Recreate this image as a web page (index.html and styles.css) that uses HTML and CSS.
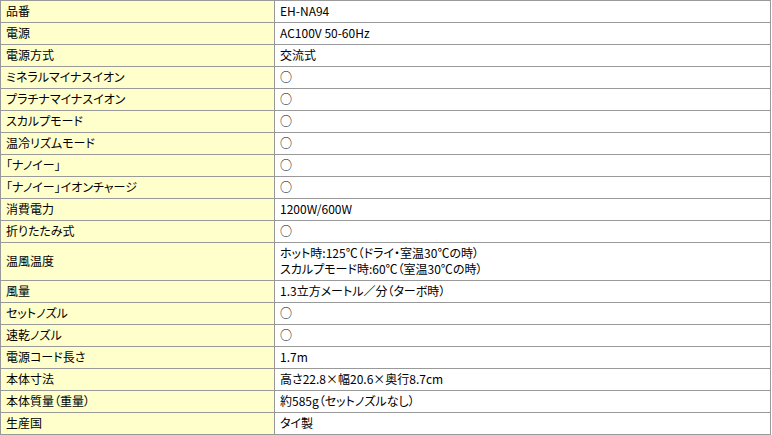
FILE: index.html
```html
<!DOCTYPE html>
<html lang="ja">
<head>
<meta charset="utf-8">
<title>仕様</title>
<link rel="stylesheet" href="styles.css">
</head>
<body>
<table class="spec">
<tbody>
<tr><th>品番</th><td>EH-NA94</td></tr>
<tr><th>電源</th><td>AC100V 50-60Hz</td></tr>
<tr><th>電源方式</th><td>交流式</td></tr>
<tr><th>ミネラルマイナスイオン</th><td>○</td></tr>
<tr><th>プラチナマイナスイオン</th><td>○</td></tr>
<tr><th>スカルプモード</th><td>○</td></tr>
<tr><th>温冷リズムモード</th><td>○</td></tr>
<tr><th>「ナノイー」</th><td>○</td></tr>
<tr><th>「ナノイー」イオンチャージ</th><td>○</td></tr>
<tr><th>消費電力</th><td>1200W/600W</td></tr>
<tr><th>折りたたみ式</th><td>○</td></tr>
<tr><th>温風温度</th><td>ホット時:125℃（ドライ・室温30℃の時）<br>スカルプモード時:60℃（室温30℃の時）</td></tr>
<tr><th>風量</th><td>1.3立方メートル／分（ターボ時）</td></tr>
<tr><th>セットノズル</th><td>○</td></tr>
<tr><th>速乾ノズル</th><td>○</td></tr>
<tr><th>電源コード長さ</th><td>1.7m</td></tr>
<tr><th>本体寸法</th><td>高さ22.8×幅20.6×奥行8.7cm</td></tr>
<tr><th>本体質量（重量）</th><td>約585g（セットノズルなし）</td></tr>
<tr><th>生産国</th><td>タイ製</td></tr>
</tbody>
</table>
</body>
</html>
```
FILE: styles.css
```css
html, body {
  margin: 0;
  padding: 0;
  background: #ffffff;
}
.spec {
  width: 771px;
  border-collapse: collapse;
  font-family: "Noto Sans CJK JP", "Liberation Sans", sans-serif;
  font-size: 12px;
  color: #000000;
  table-layout: fixed;
  font-feature-settings: "palt";
}
.spec th,
.spec td {
  border: 1px solid #999999;
  padding: 2px 4px 3px 5px;
  line-height: 16px;
  height: 16px;
  text-align: left;
  font-weight: normal;
  vertical-align: middle;
}
.spec th {
  width: 264px;
  background: #ffffcc;
}
.spec td {
  background: #ffffff;
}
```
